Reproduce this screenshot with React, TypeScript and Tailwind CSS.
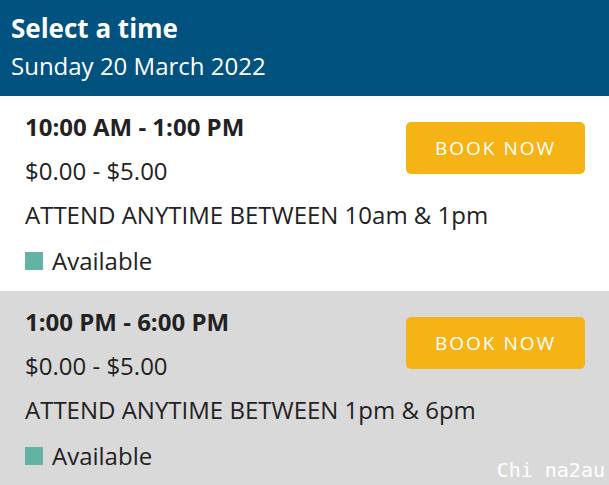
import React from "react";

const slots = [
  { time: "10:00 AM - 1:00 PM", note: "ATTEND ANYTIME BETWEEN 10am & 1pm", bg: "bg-white" },
  { time: "1:00 PM - 6:00 PM", note: "ATTEND ANYTIME BETWEEN 1pm & 6pm", bg: "bg-[#d9d9d9]" },
];

export default function App() {
  return (
    <div className="w-[609px] h-[485px] overflow-hidden relative text-[#222]" style={{ fontFamily: '"Open Sans", sans-serif' }}>
      <div className="bg-[#02527f] h-[96px] px-[11px] pt-[10px] text-white">
        <div className="text-[26px] font-bold leading-[36px]">Select a time</div>
        <div className="text-[24px] leading-[34px] mt-[3px]">Sunday 20 March 2022</div>
      </div>
      {slots.map((s, i) => (
        <div key={i} className={`${s.bg} h-[195px] pl-[25px] pr-[24px] pt-[15px] flex`}>
          <div className="flex flex-col whitespace-nowrap flex-1 min-w-0">
            <div className="text-[24px] font-bold leading-[32px]">{s.time}</div>
            <div className="text-[24px] leading-[32px] mt-[12px]">$0.00 - $5.00</div>
            <div className="text-[24px] leading-[32px] mt-[12px]">{s.note}</div>
            <div className="flex items-center gap-[9px] mt-[14px]">
              <span className="w-[18px] h-[18px] bg-[#62b3a4] inline-block"></span>
              <span className="text-[24px] leading-[32px]">Available</span>
            </div>
          </div>
          <div className="pt-[11px] shrink-0">
            <button className="w-[179px] h-[52px] rounded-[5px] bg-[#f5b316] text-white text-[19px] tracking-[2px]">BOOK NOW</button>
          </div>
        </div>
      ))}
      <div className="absolute right-[4px] bottom-[5px] text-white text-[20px] leading-none" style={{ fontFamily: '"DejaVu Sans Mono", monospace' }}>Chi na2au</div>
    </div>
  );
}
